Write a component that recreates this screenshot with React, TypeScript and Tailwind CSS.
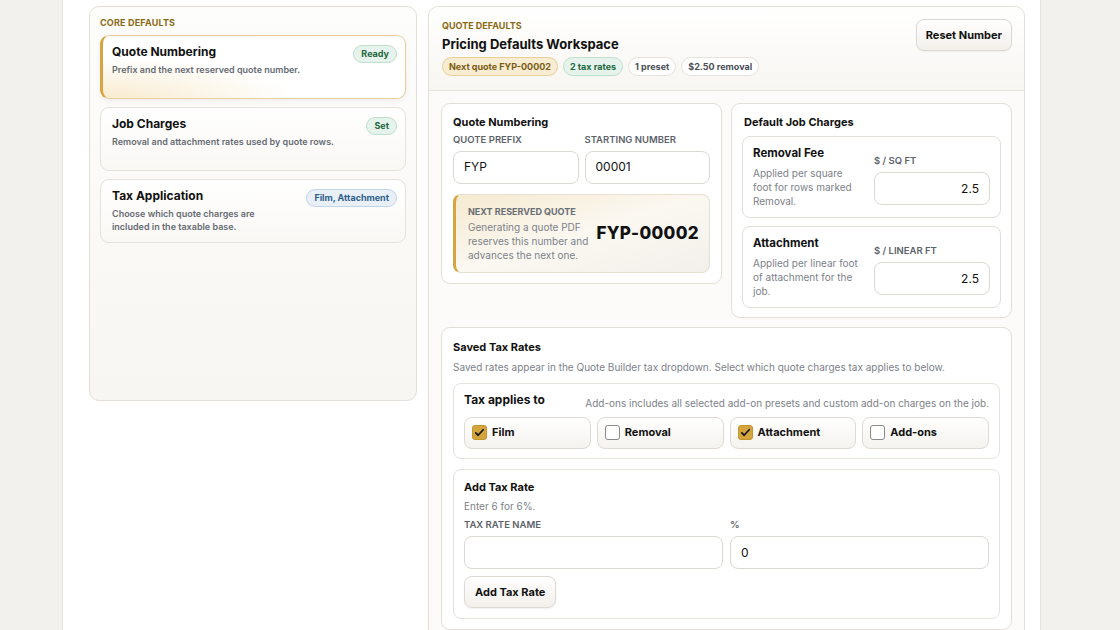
import React from "react";

const Check = ({ on }: { on: boolean }) =>
  on ? (
    <span className="w-[15px] h-[15px] rounded-[3px] bg-[#d4a53c] border border-[#c4952c] flex items-center justify-center">
      <svg width="11" height="11" viewBox="0 0 12 12"><path d="M2 6.5l2.5 2.5L10 3" stroke="#1a1a1a" strokeWidth="2" fill="none" strokeLinecap="round" strokeLinejoin="round"/></svg>
    </span>
  ) : (
    <span className="w-[15px] h-[15px] rounded-[3px] bg-white border border-[#8a8a8a]" />
  );

export default function App() {
  const input = "h-[33px] w-full rounded-[8px] border border-[#dcd8d2] bg-white px-[10px] text-[12px] text-[#111] flex items-center";
  return (
    <div className="w-[1120px] h-[630px] overflow-hidden bg-[#f3f1ee] flex" style={{ fontFamily: "Inter, 'Liberation Sans', sans-serif" }}>
      <div className="w-[979px] ml-[62px] h-full bg-white border-x border-[#e6e2dc] pt-[6px] pl-[26px] pr-[15px] flex gap-[11px] items-start">
        {/* left */}
        <div className="w-[328px] h-[395px] rounded-[10px] border border-[#e3dfd8] bg-gradient-to-b from-[#fdfdfc] to-[#f8f6f2] p-[10px] pt-[9px] flex flex-col gap-[8px]">
          <div className="text-[9px] font-bold text-[#8a6a14] tracking-[0.02em] -mb-[3px]">CORE DEFAULTS</div>
          <div className="h-[64px] rounded-[9px] border border-[#e6cf98] border-l-[3px] border-l-[#d6a542] bg-[radial-gradient(ellipse_at_bottom_left,#f8ebcf_0%,#ffffff_45%)] shadow-[0_2px_6px_rgba(0,0,0,0.06)] pl-[9px] pr-[8px] pt-[7px] flex justify-between">
            <div>
              <div className="text-[12px] font-bold text-[#111]">Quote Numbering</div>
              <div className="text-[9px] font-semibold text-[#666b73] mt-[2px]">Prefix and the next reserved quote number.</div>
            </div>
            <span className="h-[18px] mt-[2px] px-[7px] rounded-full bg-[#e6f3ec] border border-[#bfe0cc] text-[9px] font-bold text-[#22683e] flex items-center">Ready</span>
          </div>
          <div className="h-[64px] rounded-[9px] border border-[#e6e2dc] bg-gradient-to-b from-white to-[#faf8f5] px-[11px] pr-[8px] pt-[7px] flex justify-between">
            <div>
              <div className="text-[12px] font-bold text-[#111]">Job Charges</div>
              <div className="text-[9px] font-semibold text-[#666b73] mt-[2px]">Removal and attachment rates used by quote rows.</div>
            </div>
            <span className="h-[18px] mt-[2px] px-[7px] rounded-full bg-[#e6f3ec] border border-[#bfe0cc] text-[9px] font-bold text-[#22683e] flex items-center">Set</span>
          </div>
          <div className="h-[64px] rounded-[9px] border border-[#e6e2dc] bg-gradient-to-b from-white to-[#faf8f5] px-[11px] pr-[8px] pt-[7px] flex justify-between">
            <div>
              <div className="text-[12px] font-bold text-[#111]">Tax Application</div>
              <div className="text-[9px] font-semibold text-[#666b73] mt-[2px] leading-[13px] w-[170px]">Choose which quote charges are included in the taxable base.</div>
            </div>
            <span className="h-[18px] mt-[2px] px-[7px] rounded-full bg-[#e8eff7] border border-[#c5d5e8] text-[9px] font-bold text-[#2f5d8a] flex items-center">Film, Attachment</span>
          </div>
        </div>
        {/* right */}
        <div className="w-[597px] h-[640px] rounded-[10px] border border-[#e3dfd8] bg-[#fcfbf9]">
          <div className="h-[84px] border-b border-[#e8e4de] bg-gradient-to-b from-white to-[#f8f6f2] rounded-t-[10px] pl-[13px] pr-[12px] pt-[12px] flex justify-between">
            <div>
              <div className="text-[9px] font-bold text-[#8a6a14]">QUOTE DEFAULTS</div>
              <div className="text-[13px] font-bold text-[#111] mt-[2px]">Pricing Defaults Workspace</div>
              <div className="flex gap-[5px] mt-[3px]">
                <span className="h-[19px] px-[6px] rounded-full bg-[#f8ecd2] border border-[#e6cf98] text-[9px] font-bold text-[#7a5c12] flex items-center">Next quote FYP-00002</span>
                <span className="h-[19px] px-[6px] rounded-full bg-[#e6f3ec] border border-[#bfe0cc] text-[9px] font-bold text-[#22683e] flex items-center">2 tax rates</span>
                <span className="h-[19px] px-[6px] rounded-full bg-white border border-[#e6e2dc] text-[9px] font-bold text-[#4a4f57] flex items-center">1 preset</span>
                <span className="h-[19px] px-[6px] rounded-full bg-white border border-[#e6e2dc] text-[9px] font-bold text-[#4a4f57] flex items-center">$2.50 removal</span>
              </div>
            </div>
            <button className="h-[32px] px-[9px] rounded-[8px] border border-[#dcd8d2] bg-gradient-to-b from-white to-[#f3f0eb] shadow-[0_1px_2px_rgba(0,0,0,0.06)] text-[11px] font-bold text-[#111]">Reset Number</button>
          </div>
          <div className="p-[12px] flex flex-col gap-[9px]">
            <div className="flex gap-[9px] items-start">
              <div className="w-[282px] h-[181px] rounded-[9px] border border-[#e3dfd8] bg-white px-[11px] pt-[10px]">
                <div className="text-[11px] font-bold text-[#111]">Quote Numbering</div>
                <div className="grid grid-cols-2 gap-[6px] mt-[2px]">
                  <div>
                    <div className="text-[9.5px] font-semibold text-[#5d626a]">QUOTE PREFIX</div>
                    <div className={input + " mt-[4px]"}>FYP</div>
                  </div>
                  <div>
                    <div className="text-[9.5px] font-semibold text-[#5d626a]">STARTING NUMBER</div>
                    <div className={input + " mt-[4px]"}>00001</div>
                  </div>
                </div>
                <div className="mt-[10px] h-[79px] rounded-[8px] border border-[#e6dfd2] border-l-[3px] border-l-[#d6a542] bg-gradient-to-br from-[#f6ead0] via-[#fbf8f2] to-[#f3f0eb] pl-[12px] pr-[10px] flex items-center justify-between">
                  <div>
                    <div className="text-[9px] font-bold text-[#6a6e75]">NEXT RESERVED QUOTE</div>
                    <div className="text-[10px] text-[#7d8188] leading-[14px] mt-[2px] w-[125px]">Generating a quote PDF reserves this number and advances the next one.</div>
                  </div>
                  <div className="text-[17px] font-extrabold text-[#111] tracking-[0.02em]">FYP-00002</div>
                </div>
              </div>
              <div className="w-[282px] h-[215px] rounded-[9px] border border-[#e3dfd8] bg-white px-[10px] pt-[10px]">
                <div className="text-[11px] font-bold text-[#111] ml-[2px]">Default Job Charges</div>
                {[
                  ["Removal Fee", "Applied per square foot for rows marked Removal.", "$ / SQ FT"],
                  ["Attachment", "Applied per linear foot of attachment for the job.", "$ / LINEAR FT"],
                ].map(([t, d, u], i) => (
                  <div key={t} className={"h-[82px] rounded-[8px] border border-[#e3dfd8] bg-white px-[10px] flex justify-between items-center " + (i ? "mt-[8px]" : "mt-[5px]")}>
                    <div className="w-[106px]">
                      <div className="text-[11.5px] font-bold text-[#111]">{t}</div>
                      <div className="text-[10px] text-[#7d8188] leading-[14px] mt-[3px]">{d}</div>
                    </div>
                    <div className="w-[116px] pt-[6px]">
                      <div className="text-[9.5px] font-semibold text-[#5d626a]">{u}</div>
                      <div className={input + " mt-[4px] justify-end"}>2.5</div>
                    </div>
                  </div>
                ))}
              </div>
            </div>
            <div className="rounded-[9px] border border-[#e3dfd8] bg-white px-[11px] pt-[11px] pb-[10px]">
              <div className="text-[11px] font-bold text-[#111]">Saved Tax Rates</div>
              <div className="text-[10px] text-[#7d8188] mt-[4px]">Saved rates appear in the Quote Builder tax dropdown. Select which quote charges tax applies to below.</div>
              <div className="mt-[8px] rounded-[8px] border border-[#e6e2dc] bg-white px-[10px] pt-[7px] pb-[9px]">
                <div className="flex justify-between items-end">
                  <div className="text-[12px] font-bold text-[#111]">Tax applies to</div>
                  <div className="text-[10px] text-[#7d8188] -mb-[2px]">Add-ons includes all selected add-on presets and custom add-on charges on the job.</div>
                </div>
                <div className="grid grid-cols-4 gap-[6px] mt-[8px]">
                  {[["Film", true], ["Removal", false], ["Attachment", true], ["Add-ons", false]].map(([l, on]) => (
                    <div key={l as string} className="h-[32px] rounded-[8px] border border-[#dedad3] bg-gradient-to-b from-white to-[#f5f3ef] px-[7px] flex items-center gap-[5px]">
                      <Check on={on as boolean} />
                      <span className="text-[11px] font-bold text-[#111]">{l as string}</span>
                    </div>
                  ))}
                </div>
              </div>
              <div className="mt-[10px] rounded-[8px] border border-[#e6e2dc] bg-white px-[10px] pt-[9px] pb-[10px]">
                <div className="text-[11px] font-bold text-[#111]">Add Tax Rate</div>
                <div className="text-[10px] text-[#7d8188] mt-[4px]">Enter 6 for 6%.</div>
                <div className="grid grid-cols-2 gap-[7px] mt-[4px]">
                  <div>
                    <div className="text-[9.5px] font-semibold text-[#5d626a]">TAX RATE NAME</div>
                    <div className={input + " mt-[4px]"}></div>
                  </div>
                  <div>
                    <div className="text-[9.5px] font-semibold text-[#5d626a]">%</div>
                    <div className={input + " mt-[4px]"}>0</div>
                  </div>
                </div>
                <button className="mt-[7px] h-[32px] px-[10px] rounded-[8px] border border-[#dcd8d2] bg-gradient-to-b from-white to-[#f3f0eb] shadow-[0_1px_2px_rgba(0,0,0,0.06)] text-[11px] font-bold text-[#111]">Add Tax Rate</button>
              </div>
            </div>
          </div>
        </div>
      </div>
    </div>
  );
}
